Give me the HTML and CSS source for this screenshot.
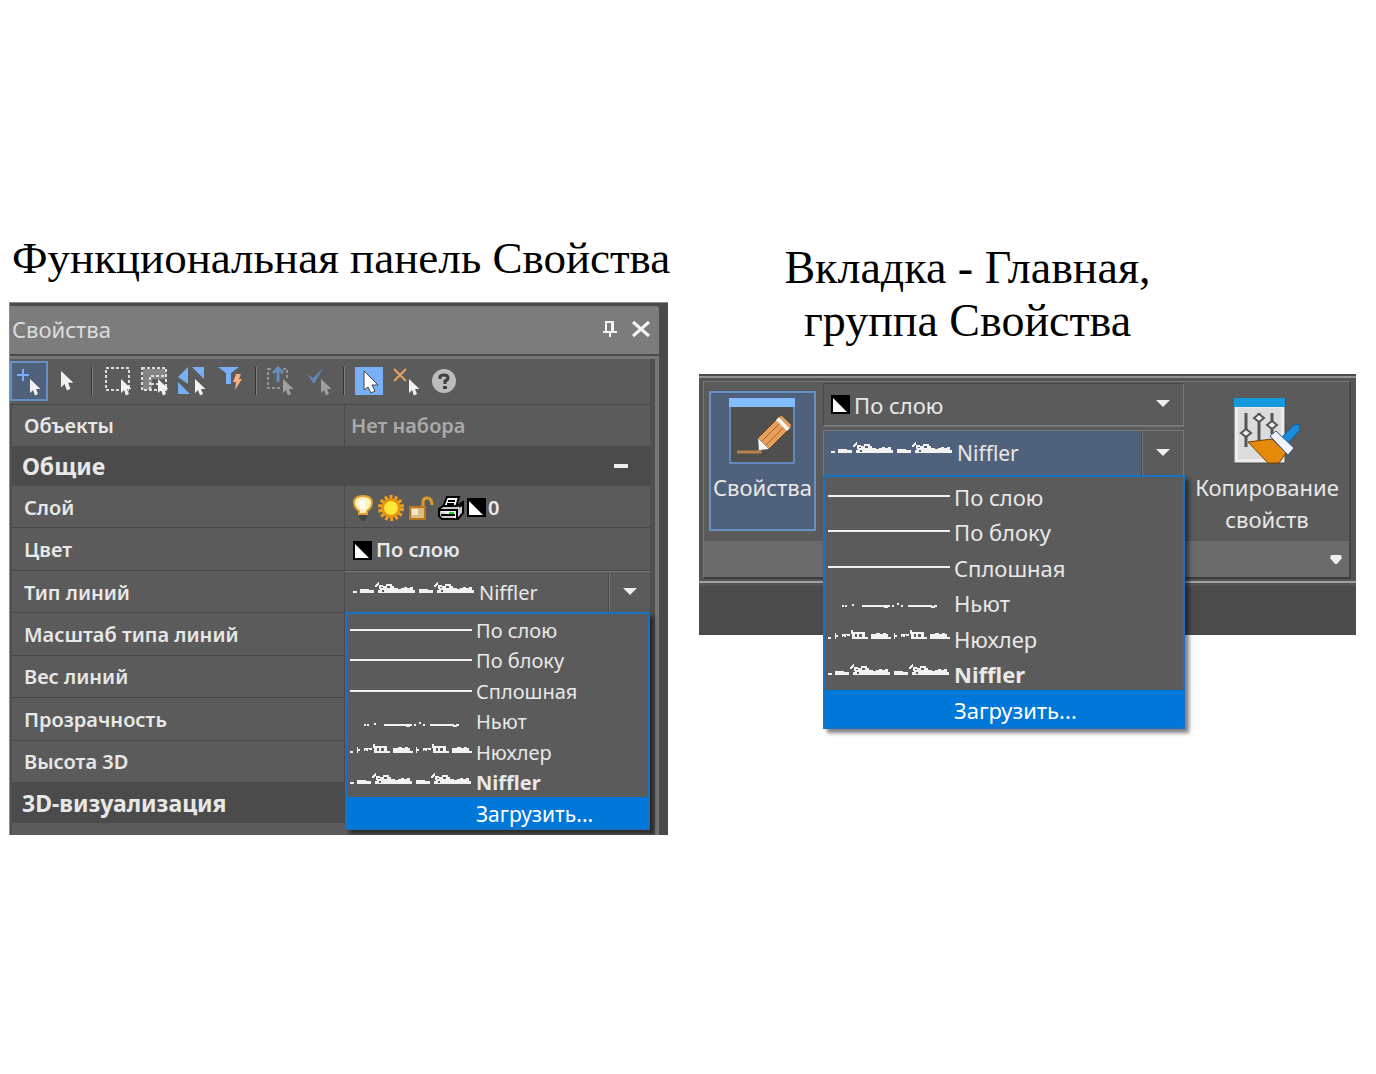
FILE: index.html
```html
<!DOCTYPE html>
<html lang="ru">
<head>
<meta charset="utf-8">
<title>Свойства: выбор типа линий</title>
<link rel="stylesheet" href="styles.css">
</head>
<body>
<svg class="defs" aria-hidden="true">
  <symbol id="cursor" viewBox="0 0 11 17"><path d="M0 0V14L3 11L5 16.500L8 15L6 10H10.500Z"/></symbol>
  <symbol id="swatch" viewBox="0 0 19 19"><path fill="#000" d="M0 0H19V19H0Z"/><path fill="#fff" d="M2 3L16 17H2Z"/></symbol>
  <symbol id="lt-solid" viewBox="0 0 122 12"><path d="M0 5H122V7H0Z"/></symbol>
  <symbol id="lt-newt" viewBox="0 0 122 12"><path d="M14 9h2v2h-2zM17 9h2v2h-2zM24 8h2v2h-2zM34 9h28v2h-2v1h-4v-1H34zM64 9h2v2h-2zM69 7h2v2h-2zM73 9h2v2h-2zM80 9h24v1h2v-1h3v2h-2v1h-4v-1H80z"/></symbol>
  <symbol id="nuh" viewBox="0 0 56 12" overflow="visible"><path d="M0 3h1v2h2v2H1v2H0zM7 4h8v2h-3v-1h-1v2H9v-1H8v1H7zM16 0h2v2h12v5h3v2H17V4h-1zM20 4v3h2V4zM24 4v3h3V4zM36 4h5v-1h4v1h3v-1h3v1h2v3h3v2H36z" fill-rule="evenodd"/></symbol>
  <symbol id="lt-nuh" viewBox="0 0 122 12"><path d="M0 8h3v2H0z"/><use href="#nuh" x="7" y="1" width="56" height="12"/><use href="#nuh" x="66" y="1" width="56" height="12"/></symbol>
  <symbol id="nif" viewBox="0 0 56 12" overflow="visible"><path d="M0 7h9v1h5v3H0zM15 3l3-3h1v2l-2 2v1h-2zM19 3h4v1h3v-2h6v2h2v2h4v1h3v-1h3v-1h3v1h3v-1h3v3h2v3H18V8h2V7h-1zM21 5v1h2V5zM27 4v2h3V4zM22 8v2h2V8z" fill-rule="evenodd"/></symbol>
  <symbol id="lt-nif" viewBox="0 0 122 12"><path d="M0 9h4v2H0z"/><use href="#nif" x="7" y="0" width="56" height="12"/><use href="#nif" x="66" y="0" width="56" height="12"/></symbol>
</svg>

<main class="board">
  <section class="side">
    <h1 class="caption caption-panel">Функциональная панель Свойства</h1>
    <div class="panel">
      <header class="panel-head">
        <h2 class="panel-title">Свойства</h2>
        <button class="head-btn" aria-label="Закрепить"><svg width="16" height="20" viewBox="0 0 16 20"><path fill="none" stroke="#f4f4f4" stroke-width="2" d="M4 13V3H11V13M1 13H15M8 13V18"/><path stroke="#f4f4f4" stroke-width="2" d="M10 3V13"/></svg></button>
        <button class="head-btn" aria-label="Закрыть"><svg width="18" height="18" viewBox="0 0 18 18"><path stroke="#f4f4f4" stroke-width="3" d="M1 2L17 16M17 2L1 16"/></svg></button>
      </header>
      <div class="panel-body">
        <div class="tools" role="toolbar" aria-label="Выбор объектов">
          <button class="tool tool-on" aria-label="Добавить к выбору"><svg viewBox="0 0 38 40"><path stroke="#79b0f5" stroke-width="2" d="M7 14H19M13 8V20"/><use href="#cursor" x="20" y="18" width="11" height="17"/></svg></button>
          <button class="tool" aria-label="Выбрать"><svg viewBox="0 0 38 40"><use href="#cursor" x="13" y="10" width="13" height="20"/></svg></button>
          <span class="tool-sep"></span>
          <button class="tool" aria-label="Рамка"><svg viewBox="0 0 38 40"><path fill="none" stroke="#ddd" stroke-width="2" stroke-dasharray="3 2" d="M8 7H31V29H8Z"/><path fill="#5b5b5b" d="M22 19h8v14h-8z"/><use href="#cursor" x="23" y="18" width="11" height="17"/></svg></button>
          <button class="tool" aria-label="Секущая рамка"><svg viewBox="0 0 38 40"><path fill="#858585" d="M7 8H30V18H16V29H7Z"/><path fill="none" stroke="#ddd" stroke-width="2" stroke-dasharray="3 2" d="M6 7H30V29H6ZM14 29V15H30"/><path fill="none" stroke="#ddd" stroke-width="2" stroke-dasharray="3 2" d="M15 23H23"/><use href="#cursor" x="22" y="18" width="11" height="17"/></svg></button>
          <button class="tool" aria-label="Инвертировать"><svg viewBox="0 0 38 40"><path fill="#79b0f5" d="M4 16L14 6V23ZM18 6H30V18ZM4 21L16 33H4Z"/><use href="#cursor" x="21" y="18" width="11" height="17"/></svg></button>
          <button class="tool" aria-label="Быстрый выбор"><svg viewBox="0 0 38 40"><path fill="#79b0f5" d="M6 6H27L19 12V23H14V12Z"/><path fill="#f3b27f" d="M24 13H29L27 18H30L23 29L24 21H21Z"/></svg></button>
          <span class="tool-sep"></span>
          <button class="tool" aria-label="Переместить выбор" disabled><svg viewBox="0 0 38 40"><path fill="none" stroke="#959595" stroke-width="2" stroke-dasharray="3 2" d="M6 8H25V27H6Z"/><path fill="#5b5b5b" d="M11 5h9v10h-9zM20 18h8v14h-8z"/><path fill="none" stroke="#6690bb" stroke-width="3" d="M16 21V8M11 12L16 7L21 12"/><use class="dim" href="#cursor" x="21" y="18" width="11" height="17"/></svg></button>
          <button class="tool" aria-label="Применить" disabled><svg viewBox="0 0 38 40"><path fill="#5f8ab5" d="M7 13L13 17L23 7L14 23Z"/><use class="dim" href="#cursor" x="21" y="18" width="11" height="17"/></svg></button>
          <span class="tool-sep"></span>
          <button class="tool" aria-label="Режим курсора"><svg viewBox="0 0 38 40"><path fill="#79b0f5" d="M5 6H33V34H5Z"/><path fill="#fff" stroke="#444" stroke-width="1" d="M14 10V29L18 26L21 32L25 30L22 24H28Z"/></svg></button>
          <button class="tool" aria-label="Снять выбор"><svg viewBox="0 0 38 40"><path stroke="#e8a260" stroke-width="2" d="M6 8L18 20M18 8L6 20"/><use href="#cursor" x="21" y="18" width="11" height="17"/></svg></button>
          <button class="tool" aria-label="Справка"><svg viewBox="0 0 38 40"><circle cx="18" cy="20" r="12" fill="#bcbcbc"/><path fill="none" stroke="#3f3f3f" stroke-width="3" d="M14 18V16Q14 14 18 14Q22 14 22 17Q22 19 19 20V23"/><path fill="#3f3f3f" d="M17 25h4v3h-4z"/></svg></button>
        </div>
        <div class="props">
          <div class="row row-first"><span class="name">Объекты</span><span class="value value-none">Нет набора</span></div>
          <h3 class="group">Общие<button class="fold" aria-label="Свернуть"></button></h3>
          <div class="rows">
            <div class="row"><span class="name">Слой</span><span class="value layer">
              <svg width="24" height="26" viewBox="0 0 24 26"><path fill="#fff2c2" stroke="#e3a12c" stroke-width="2" d="M8 19V16Q3 12 3 8Q3 1 12 1Q21 1 21 8Q21 12 16 16V19Z"/><path fill="#fffdf0" d="M8 5h6v9H9z"/><path fill="#444" d="M8 20h8v2l-3 4h-2l-3-4z"/></svg>
              <svg width="28" height="28" viewBox="0 0 28 28"><circle cx="14" cy="14" r="10" fill="#e88f0c"/><circle cx="14" cy="14" r="11" fill="none" stroke="#eda01c" stroke-width="4" stroke-dasharray="3 2"/><circle cx="14" cy="14" r="7" fill="#ffe838"/></svg>
              <svg width="28" height="26" viewBox="0 0 28 26"><path fill="none" stroke="#d99b2b" stroke-width="3" d="M16 13V7Q16 3 20 3Q25 3 25 10"/><path fill="#d9bd83" stroke="#b6771e" stroke-width="2" d="M3 12H18V24H3Z"/><path fill="#f3e6c8" d="M5 14h6v6H5z"/></svg>
              <svg width="28" height="26" viewBox="0 0 28 26"><path fill="#fff" stroke="#000" stroke-width="2" d="M10 2H22L19 12H6Z"/><path stroke="#000" stroke-width="2" d="M11 6H18M10 9H17"/><path fill="#ccc" stroke="#000" stroke-width="2" d="M2 14L6 11H20L26 7V18L21 24H5L2 21Z"/><path stroke="#000" stroke-width="2" d="M2 15H20V24M4 20H18M22 12L26 9"/><path fill="#1fd41f" d="M12 17h5v2h-5z"/></svg>
              <svg width="19" height="19"><use href="#swatch"/></svg><span>0</span></span></div>
            <div class="row"><span class="name">Цвет</span><span class="value color"><svg width="19" height="19"><use href="#swatch"/></svg><span>По слою</span></span></div>
            <div class="row"><label class="name" for="lt-panel">Тип линий</label>
              <div class="value combo">
                <svg class="line" width="122" height="12"><use href="#lt-nif"/></svg>
                <select class="pick" id="lt-panel"><option>Niffler</option></select>
                <span class="drop"></span>
                <ul class="menu menu-panel" role="listbox" aria-label="Тип линий">
                  <li><button class="item" role="option"><svg class="line" width="122" height="12"><use href="#lt-solid"/></svg>По слою</button></li>
                  <li><button class="item" role="option"><svg class="line" width="122" height="12"><use href="#lt-solid"/></svg>По блоку</button></li>
                  <li><button class="item" role="option"><svg class="line" width="122" height="12"><use href="#lt-solid"/></svg>Сплошная</button></li>
                  <li><button class="item" role="option"><svg class="line" width="122" height="12"><use href="#lt-newt"/></svg>Ньют</button></li>
                  <li><button class="item" role="option"><svg class="line line-high" width="122" height="12"><use href="#lt-nuh"/></svg>Нюхлер</button></li>
                  <li><button class="item item-current" role="option" aria-selected="true"><svg class="line line-high" width="122" height="12"><use href="#lt-nif"/></svg>Niffler</button></li>
                  <li><button class="item item-load" role="option">Загрузить...</button></li>
                </ul>
              </div>
            </div>
            <div class="row"><span class="name">Масштаб типа линий</span><span class="value"></span></div>
            <div class="row"><span class="name">Вес линий</span><span class="value"></span></div>
            <div class="row"><span class="name">Прозрачность</span><span class="value"></span></div>
            <div class="row"><span class="name">Высота 3D</span><span class="value"></span></div>
          </div>
          <h3 class="group">3D-визуализация</h3>
          <div class="row row-cut"></div>
        </div>
      </div>
    </div>
  </section>

  <section class="side">
    <h1 class="caption caption-ribbon">Вкладка - Главная,<br>группа Свойства</h1>
    <div class="ribbon">
      <div class="ribbon-group">
        <div class="ribbon-body">
          <button class="big big-on">
            <svg width="66" height="66" viewBox="0 0 66 66"><path fill="#4f4f4f" stroke="#6289b8" stroke-width="2" d="M1 1H65V65H1Z"/><path fill="#83bdff" d="M0 0H66V9H0Z"/><path fill="none" stroke="#b9814f" stroke-width="3" d="M8 54H31V49"/><path fill="#e5a05c" stroke="#74431c" stroke-width="1" d="M29 40L50 19L61 30L40 51Z"/><path stroke="#a8642c" stroke-width="1" d="M33 43L54 22M37 47L58 26"/><path fill="#f4f4f4" d="M29 40L40 51L30 52ZM47 22L50 19L61 30L58 33Z"/><path fill="#e5a05c" d="M50 19L53 18L62 27L61 31Z"/></svg>
            <span>Свойства</span>
          </button>
          <div class="fields">
            <div class="field field-color">
              <svg width="19" height="19"><use href="#swatch"/></svg>
              <select class="pick" aria-label="Цвет"><option>По слою</option></select>
              <span class="drop"></span>
            </div>
            <div class="field field-line">
              <svg class="line" width="122" height="12"><use href="#lt-nif"/></svg>
              <select class="pick" aria-label="Тип линий"><option>Niffler</option></select>
              <span class="drop"></span>
              <ul class="menu menu-ribbon" role="listbox" aria-label="Тип линий">
                <li><button class="item" role="option"><svg class="line" width="122" height="12"><use href="#lt-solid"/></svg>По слою</button></li>
                <li><button class="item" role="option"><svg class="line" width="122" height="12"><use href="#lt-solid"/></svg>По блоку</button></li>
                <li><button class="item" role="option"><svg class="line" width="122" height="12"><use href="#lt-solid"/></svg>Сплошная</button></li>
                <li><button class="item" role="option"><svg class="line" width="122" height="12"><use href="#lt-newt"/></svg>Ньют</button></li>
                <li><button class="item" role="option"><svg class="line line-high" width="122" height="12"><use href="#lt-nuh"/></svg>Нюхлер</button></li>
                <li><button class="item item-current" role="option" aria-selected="true"><svg class="line line-high" width="122" height="12"><use href="#lt-nif"/></svg>Niffler</button></li>
                <li><button class="item item-load" role="option">Загрузить...</button></li>
              </ul>
            </div>
          </div>
          <button class="big big-copy">
            <svg width="66" height="66" viewBox="0 0 66 66"><path fill="#ececec" stroke="#4a4a4a" stroke-width="1" d="M0 0H51V65H0Z"/><path fill="#dcdcdc" d="M4 10H47V61H4Z"/><path fill="#1499dc" d="M0 0H51V9H0Z"/><path stroke="#555" stroke-width="3" d="M12 15V49M25 15V45M38 15V36"/><path fill="#eee" stroke="#555" stroke-width="2" d="M7 35L12 31L17 35L12 39ZM20 20L25 16L30 20L25 24ZM33 27L38 23L43 27L38 31Z"/><path fill="#e48a0b" stroke="#754307" stroke-width="1" d="M14 44L38 41L52 55L45 65H34Z"/><path fill="#1b8bdd" stroke="#155b96" stroke-width="1" d="M48 39L60 27L65 26L66 32L54 45Z"/><path fill="#f0f4fa" stroke="#34588a" stroke-width="1" d="M36 38L42 33L60 50L54 57Z"/></svg>
            <span>Копирование<br>свойств</span>
          </button>
        </div>
        <button class="ribbon-foot" aria-label="Дополнительно"><svg width="12" height="9" viewBox="0 0 12 9"><path fill="#eee" d="M1 0H11L12 3L7 9H5L0 3Z"/></svg></button>
      </div>
    </div>
  </section>
</main>
</body>
</html>
```
FILE: styles.css
```css
* { box-sizing: border-box; }

body {
  margin: 0;
  background: #fff;
  color: #e8e8e8;
  font: 20px/28px "Noto Sans", "Open Sans", sans-serif;
}

button, select {
  margin: 0;
  padding: 0;
  border: 0;
  background: none;
  color: inherit;
  font: inherit;
}

h1, h2, h3, ul { margin: 0; padding: 0; font-weight: 400; list-style: none; }
svg { display: block; flex: none; fill: #f2f2f2; }
.defs { position: absolute; width: 0; height: 0; }

.board {
  display: grid;
  grid-template-columns: 659fr 657fr;
  gap: 31px;
  align-items: start;
  padding: 232px 20px 0 9px;
}

.side { min-width: 0; }

.caption {
  color: #000;
  font-family: "Liberation Serif", serif;
  font-size: 45px;
  line-height: 53px;
  white-space: nowrap;
}
.caption-panel { padding: 0 0 17px 3px; }
.caption-ribbon { padding: 9px 120px 27px 0; font-size: 46px; text-align: center; }

/* Properties panel */
.panel {
  padding: 3px 9px 0 0;
  border-left: 1px solid #8a8a8a;
  border-top: 1px solid #8a8a8a;
  background: #4a4a4a;
}
.panel-head {
  display: flex;
  align-items: center;
  gap: 14px;
  height: 48px;
  padding: 0 9px 3px 2px;
  border-radius: 0 3px 0 0;
  background: #7c7c7c;
}
.panel-title { flex: 1; font-size: 22px; color: #dcdcdc; }
.panel-body {
  margin-top: 2px;
  padding-right: 5px;
  border-top: 3px solid #767676;
  border-right: 4px solid #767676;
  background: #505050;
}

.tools {
  display: flex;
  align-items: center;
  height: 46px;
  padding-bottom: 2px;
  border-bottom: 1px solid #494949;
  background: #5b5b5b;
}
.tool { width: 38px; height: 40px; }
.tool svg { width: 38px; height: 40px; }
.tool-on { background: #50627b; box-shadow: inset 0 0 0 2px #6790c6; }
.tool-sep { width: 2px; height: 28px; margin: 0 5px; border-left: 1px solid #333; border-right: 1px solid #808080; }
.dim { fill: #a0a0a0; }

.props { padding-left: 2px; }
.row {
  display: grid;
  grid-template-columns: 332px 1fr;
  border-bottom: 1px solid #494949;
  background: #5b5b5b;
  font-weight: 600;
}
.row-first { height: 41px; border: 0; }
.row-cut { height: 12px; border: 0; }
.rows { display: grid; grid-auto-rows: 1fr; height: 297px; }
.rows .name, .rows .value { padding-top: 2px; }
.name { align-self: center; padding-left: 12px; }
.value {
  display: flex;
  align-items: center;
  min-width: 0;
  padding-left: 6px;
  border-left: 1px solid #4b4b4b;
}
.value-none { color: #a9a9a9; }
.layer { gap: 2px; }
.color { padding-left: 8px; gap: 4px; }
.group {
  display: flex;
  justify-content: space-between;
  align-items: center;
  height: 40px;
  padding: 0 22px 0 10px;
  background: #4b4b4b;
  font-size: 23px;
  font-weight: 700;
}
.fold { width: 14px; height: 4px; background: #eee; }

/* Drop-downs */
.combo, .field { position: relative; display: flex; align-items: center; font-weight: 400; }
.combo { padding-left: 8px; border-top: 1px solid #777; }
.pick { flex: 1; min-width: 0; align-self: stretch; padding-left: 4px; appearance: none; outline: 0; }
.drop { display: grid; place-items: center; align-self: stretch; width: 41px; }
.drop::after {
  content: "";
  border: solid transparent;
  border-width: 7px 7px 0;
  border-top-color: #eee;
}
.combo .drop, .field-line .drop { border-left: 1px solid #787878; box-shadow: -1px 0 #484848; }
.combo .drop { padding-bottom: 4px; }
.field .drop { padding-bottom: 2px; }
.line { shape-rendering: crispEdges; }
.combo > .line, .field > .line { margin-bottom: 10px; }

.menu {
  position: absolute;
  z-index: 1;
  top: 100%;
  display: grid;
  grid-template-rows: repeat(6, 1fr) auto;
  border: 2px solid #1673c4;
  background: #5b5b5b;
  box-shadow: 4px 4px 4px rgba(0, 0, 0, .5);
}
.menu-panel { left: 0; right: 0; height: 218px; }
.menu-ribbon { left: -1px; right: -2px; height: 254px; font-size: 22px; }
.item { display: flex; align-items: center; gap: 4px; width: 100%; height: 100%; padding: 2px 0 0 3px; white-space: nowrap; }
.menu-ribbon .item { padding-top: 4px; }
.item .line { margin-bottom: 2px; }
.item .line-high { margin-bottom: 8px; }
.item-current { font-weight: 700; }
.menu .item-load { height: 31px; padding: 2px 0 0 129px; background: #0078d9; color: #fff; }
.menu-panel .item-load { font-size: 21px; }
.menu-ribbon .item-load { height: 37px; }

/* Ribbon */
.ribbon {
  padding: 5px 5px 56px 4px;
  border-top: 2px solid #4a4a4a;
  background: linear-gradient(#929292 0 2px, #555 2px 205px, #a0a0a0 205px 207px, #555 207px 210px, #4b4b4b 210px);
}
.ribbon-group { border: 1px solid #777; border-right: 2px solid #444; border-bottom: 2px solid #3c3c3c; background: #5b5b5b; }
.ribbon-body { display: flex; height: 159px; padding: 1px 6px 0 5px; }
.big { display: flex; flex-direction: column; align-items: center; gap: 7px; font-size: 22px; line-height: 32px; }
.big svg { margin-right: 2px; }
.big-on { width: 107px; height: 140px; margin-top: 8px; padding-top: 5px; border: 2px solid #6790c6; background: #50627b; }
.big-copy { width: 152px; padding-top: 15px; }
.big-copy svg { margin-right: 0; }
.fields { flex: 1; min-width: 0; padding: 0 7px 0 7px; }
.field { height: 44px; border: 1px solid #484848; border-right-color: #777; border-bottom: 2px solid #777; font-size: 22px; }
.field-color { padding-left: 7px; }
.field-line { height: 46px; margin-top: 3px; padding-left: 7px; border: 1px solid #777; background: #50627b; font-size: 21px; }
.field-line .drop { background: #5b5b5b; }
.ribbon-foot { display: flex; justify-content: flex-end; align-items: center; width: 100%; height: 36px; padding-right: 7px; background: #6b6b6b; }
```
